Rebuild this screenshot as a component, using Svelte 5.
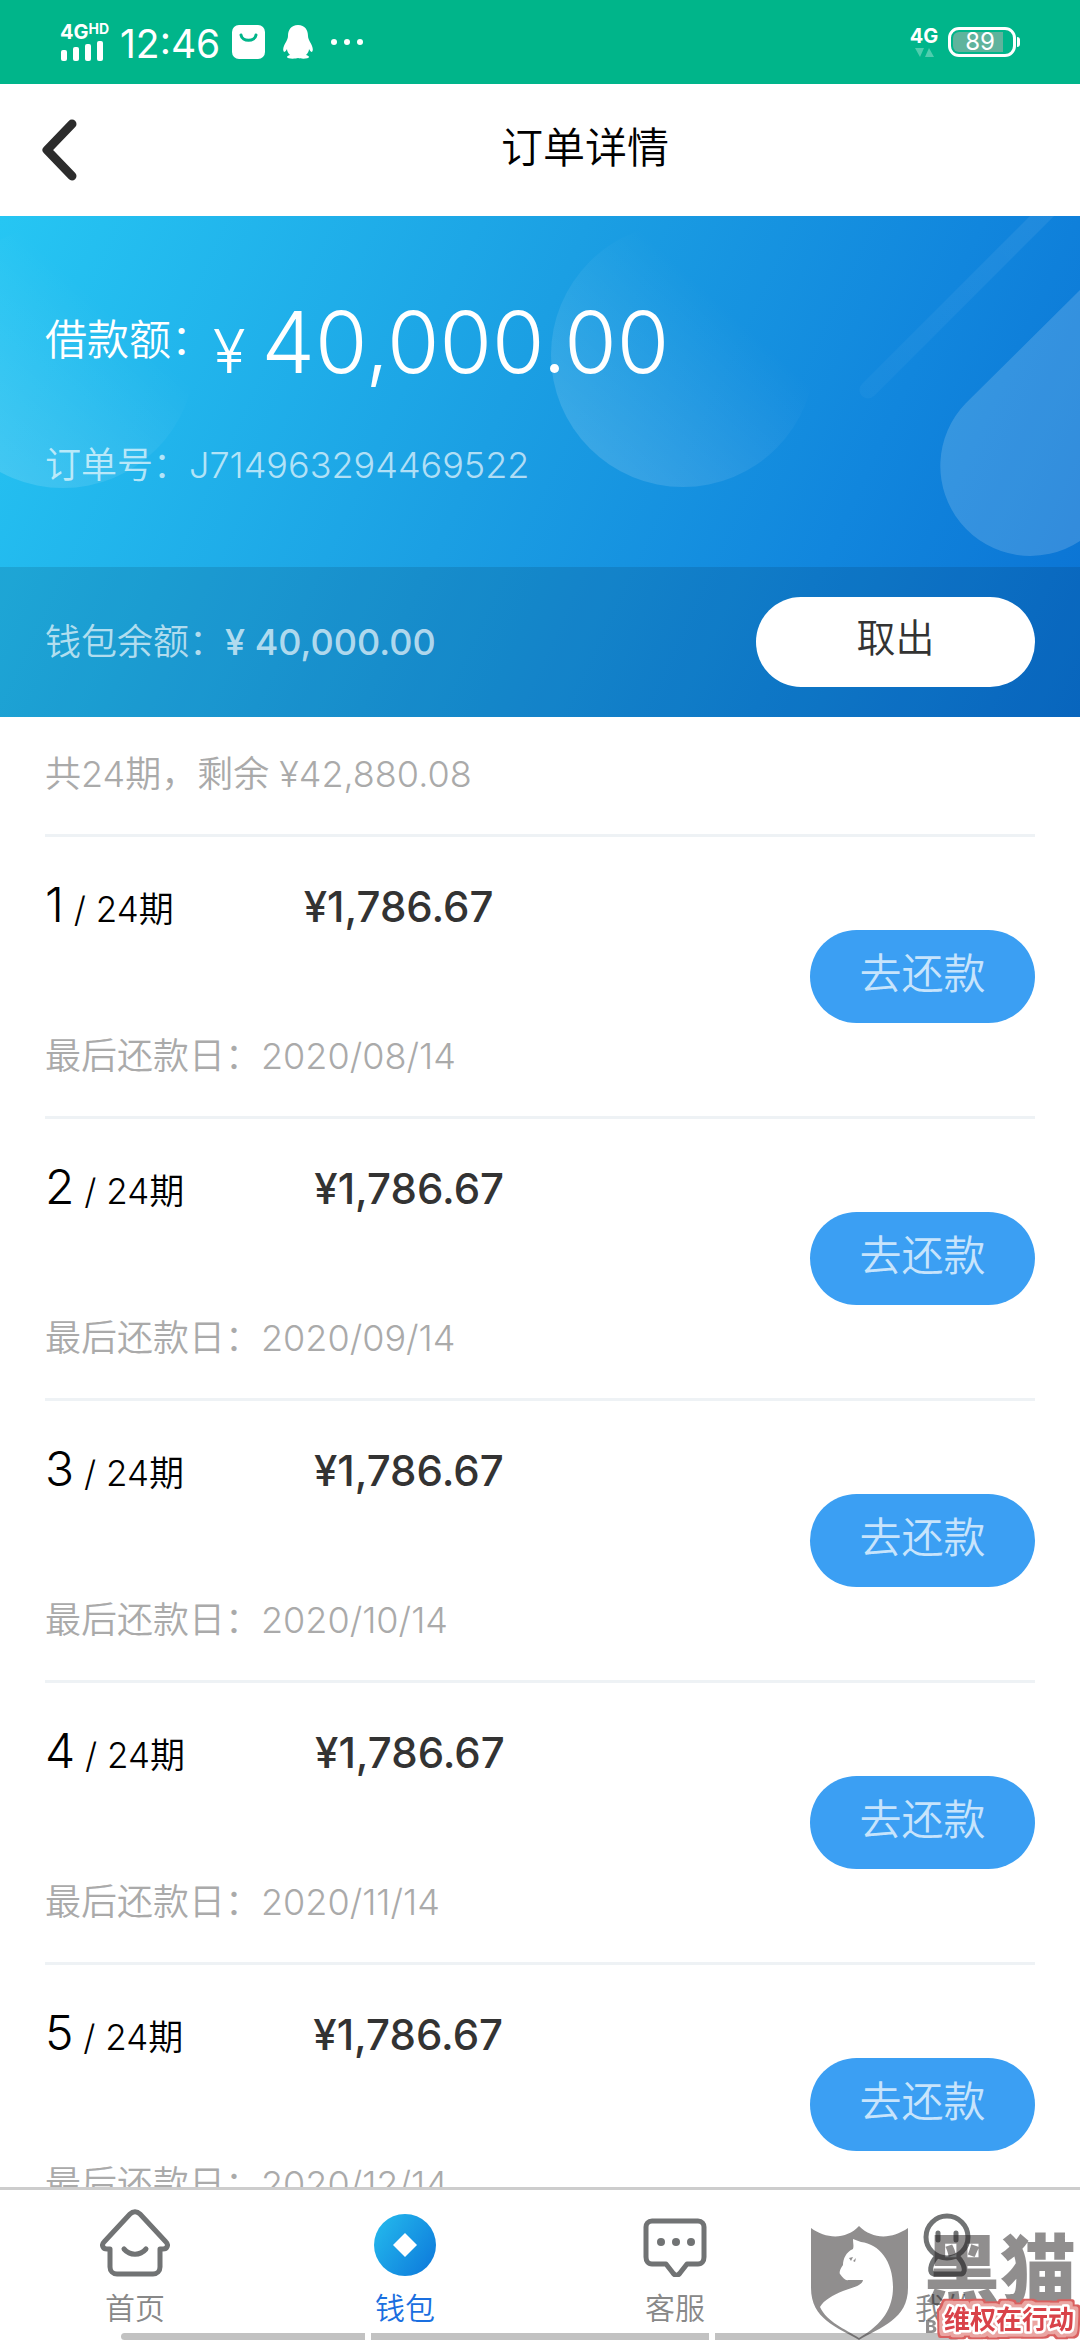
<script>
  const total = 24;
  const installments = [
    { no: 1, amount: '¥1,786.67', due: '2020/08/14' },
    { no: 2, amount: '¥1,786.67', due: '2020/09/14' },
    { no: 3, amount: '¥1,786.67', due: '2020/10/14' },
    { no: 4, amount: '¥1,786.67', due: '2020/11/14' },
    { no: 5, amount: '¥1,786.67', due: '2020/12/14' }
  ];
</script>

<div class="app">
  <div class="status">
    <div class="status-side">
      <div class="signal">
        <span class="net">4G<small>HD</small></span>
        <svg width="44" height="20" viewBox="0 0 44 20" fill="#fff" aria-hidden="true">
          <rect x="1" y="9" width="6" height="11" rx="2" />
          <rect x="13" y="6" width="6" height="14" rx="2" />
          <rect x="25" y="3" width="6" height="17" rx="2" />
          <rect x="37" y="0" width="6" height="20" rx="2" />
        </svg>
      </div>
      <span class="clock">12:46</span>
      <svg class="bag" width="33" height="34" viewBox="0 0 33 34" aria-hidden="true">
        <rect width="33" height="34" rx="7" fill="#fff" />
        <path d="M9 10c1 7 14 7 15 0" fill="none" stroke="#00b58a" stroke-width="3" stroke-linecap="round" />
      </svg>
      <svg class="penguin" width="30" height="34" viewBox="0 0 30 34" fill="#fff" aria-hidden="true">
        <path d="M15 0C8 0 5 5 5 11c0 2-1 4-2 6-2 3-4 8-2 10 1 0 2-1 3-3 0 2 1 4 3 6-1 0-3 1-3 2 0 2 8 2 11 1 3 1 11 1 11-1 0-1-2-2-3-2 2-2 3-4 3-6 1 2 2 3 3 3 2-2 0-7-2-10-1-2-2-4-2-6C25 5 22 0 15 0z" />
      </svg>
      <svg class="dots" width="34" height="8" viewBox="0 0 34 8" fill="#fff" aria-hidden="true">
        <circle cx="4" cy="4" r="3" /><circle cx="17" cy="4" r="3" /><circle cx="30" cy="4" r="3" />
      </svg>
    </div>
    <div class="status-side">
      <div class="signal data">
        <span class="net">4G</span>
        <svg width="20" height="10" viewBox="0 0 20 10" fill="#4fcdae" aria-hidden="true">
          <path d="M1 0h9l-4 9zM11 9h9l-5-9z" />
        </svg>
      </div>
      <div class="battery"><span>89</span></div>
    </div>
  </div>

  <header class="header">
    <button class="back" aria-label="返回">
      <svg width="36" height="62" viewBox="0 0 36 62" aria-hidden="true">
        <path d="M30 5 5 31l25 26" fill="none" stroke="#2c2c2c" stroke-width="9" stroke-linecap="round" stroke-linejoin="round" />
      </svg>
    </button>
    <h1>订单详情</h1>
  </header>

  <section class="hero">
    <svg class="shapes" width="1080" height="501" viewBox="0 0 1080 501" aria-hidden="true">
      <defs>
        <linearGradient id="bubble" x1="0.2" y1="0.9" x2="0.7" y2="0.35">
          <stop offset="0" stop-color="#fff" stop-opacity=".14" />
          <stop offset="1" stop-color="#fff" stop-opacity="0" />
        </linearGradient>
        <linearGradient id="beam" gradientUnits="userSpaceOnUse" x1="860" y1="186" x2="1050" y2="0">
          <stop offset="0" stop-color="#fff" stop-opacity=".03" />
          <stop offset="1" stop-color="#fff" stop-opacity=".07" />
        </linearGradient>
      </defs>
      <circle cx="63" cy="140" r="132" fill="url(#bubble)" />
      <circle cx="683" cy="139" r="132" fill="url(#bubble)" />
      <path d="M868 174 1062-20" fill="none" stroke="url(#beam)" stroke-width="17" stroke-linecap="round" />
      <path d="M1080 74 966 187a90 90 0 0 0 114 138z" fill="#fff" fill-opacity=".16" />
    </svg>
    <div class="loan">
      <p class="amount-line">
        <span class="label">借款额：</span>
        <span class="yen">¥</span>
        <span class="amount">40,000.00</span>
      </p>
      <p class="order">订单号：J714963294469522</p>
    </div>
    <div class="wallet">
      <p>钱包余额：<b>¥ 40,000.00</b></p>
      <button class="withdraw">取出</button>
    </div>
  </section>

  <main class="content">
    <p class="summary">共24期，剩余 ¥42,880.08</p>
    <ul class="list">
      {#each installments as item}
        <li class="row">
          <div class="info">
            <p class="term">
              <span class="period"><em>{item.no}</em> / {total}期</span>
              <strong>{item.amount}</strong>
            </p>
            <p class="due">最后还款日：{item.due}</p>
          </div>
          <button class="repay">去还款</button>
        </li>
      {/each}
    </ul>
  </main>

  <nav class="tabs">
    <a class="tab" href="#home">
      <svg width="70" height="68" viewBox="0 0 70 68" fill="none" stroke="#717374" stroke-width="5" stroke-linecap="round" stroke-linejoin="round" aria-hidden="true">
        <path d="M10 40H7c-4 0-6-4-3-7L30 5c3-3 7-3 10 0l26 28c3 3 1 7-3 7h-3v18c0 4-3 7-7 7H17c-4 0-7-3-7-7z" />
        <path d="M24 40c6 7 16 7 22 0" />
      </svg>
      <span>首页</span>
    </a>
    <a class="tab active" href="#wallet">
      <svg width="70" height="68" viewBox="0 0 70 68" aria-hidden="true">
        <defs>
          <linearGradient id="coin" x1="0" y1="0.2" x2="1" y2="0.9">
            <stop offset="0" stop-color="#23b7ec" />
            <stop offset="1" stop-color="#0d79db" />
          </linearGradient>
        </defs>
        <circle cx="35" cy="36" r="31" fill="url(#coin)" />
        <path d="M35 24 47 36 35 48 23 36z" fill="#fff" />
      </svg>
      <span>钱包</span>
    </a>
    <a class="tab" href="#service">
      <svg width="70" height="68" viewBox="0 0 70 68" aria-hidden="true">
        <path d="M12 12h46c4 0 6 3 6 6v30c0 4-2 7-6 7H47l-7 9c-2 3-5 3-7 0l-7-9H12c-4 0-6-3-6-7V18c0-3 2-6 6-6z" fill="none" stroke="#717374" stroke-width="5" stroke-linejoin="round" />
        <g fill="#717374"><circle cx="21" cy="33" r="4" /><circle cx="36" cy="33" r="4" /><circle cx="51" cy="33" r="4" /></g>
      </svg>
      <span>客服</span>
    </a>
    <a class="tab" href="#me">
      <svg width="70" height="68" viewBox="0 0 70 68" fill="none" stroke="#717374" stroke-width="5" stroke-linecap="round" aria-hidden="true">
        <circle cx="37" cy="28" r="21" />
        <path d="M28 24v7M46 24v7M27 47c-7 8-9 18-2 18h25c7 0 5-10-3-18" />
      </svg>
      <span>我的</span>
    </a>
    <div class="handles" aria-hidden="true"><i></i><i></i><i></i></div>
    <svg class="badge" width="276" height="120" viewBox="0 0 276 120" role="img" aria-label="黑猫 维权在行动">
      <defs>
        <filter id="halo" x="-10%" y="-40%" width="120%" height="180%">
          <feMorphology in="SourceAlpha" operator="dilate" radius="5" result="wide" />
          <feFlood flood-color="#d9605f" />
          <feComposite in2="wide" operator="in" result="outer" />
          <feMorphology in="SourceAlpha" operator="dilate" radius="3" result="mid" />
          <feFlood flood-color="#eaa5a2" />
          <feComposite in2="mid" operator="in" result="inner" />
          <feMerge>
            <feMergeNode in="outer" />
            <feMergeNode in="inner" />
            <feMergeNode in="SourceGraphic" />
          </feMerge>
        </filter>
      </defs>
      <g opacity=".5" fill="#231f20">
        <path fill-rule="evenodd" d="M7 8c15 11 35 12 48-2 14 14 33 13 49 2v60c0 31-27 39-49 52C33 107 7 99 7 68zM49 19c0 4 1 7 0 10-7 3-10 10-10 16-3 4-4 8-3 9 3 4 6 7 8 6h15c-1 6-12 8-20 11-10 4-19 9-23 16 7 15 25 22 39 31 24-14 34-30 34-51 0-26-14-43-32-45z" />
        <path d="m45 38 4-1-2 4zM49 41l3-3-1 4z" />
        <text class="brand" x="120" y="78">黑猫</text>
        <text class="latin" x="121" y="113">BLACK CAT</text>
      </g>
      <text class="slogan" x="140" y="109" filter="url(#halo)">维权在行动</text>
    </svg>
  </nav>
</div>

<style>
  :global(body) { background: #fff; }
  .app {
    display: flex;
    flex-direction: column;
    height: 100vh;
    overflow: hidden;
    font-family: Inter, "Noto Sans CJK SC", sans-serif;
    font-weight: 350;
    font-size: 36px;
    line-height: 48px;
    color: #000;
    background: #fff;
  }
  p, h1, ul { margin: 0; padding: 0; }
  button { border: 0; padding: 0; font: inherit; cursor: pointer; }

  .status {
    flex: none;
    display: flex;
    justify-content: space-between;
    height: 84px;
    padding: 0 64px 0 60px;
    color: #fff;
    background: #00b58a;
  }
  .status-side { display: flex; align-items: center; }
  .signal { display: flex; flex-direction: column; width: 48px; }
  .net { display: flex; align-items: flex-start; font-size: 20px; line-height: 18px; font-weight: 700; }
  .net small { font-size: 14px; line-height: 12px; }
  .clock { margin-left: 12px; font-size: 39px; font-weight: 400; padding-top: 4px; }
  .bag { margin-left: 12px; }
  .penguin { margin-left: 18px; }
  .dots { margin-left: 17px; }
  .data { width: 24px; align-items: center; margin-right: 12px; gap: 3px; }
  .battery {
    position: relative;
    box-sizing: border-box;
    width: 68px;
    height: 30px;
    padding: 2px;
    border: 3px solid #fff;
    border-radius: 11px;
  }
  .battery span {
    display: block;
    width: 50px;
    padding-left: 4px;
    box-sizing: border-box;
    border-radius: 6px 0 0 6px;
    text-align: center;
    font-size: 24px;
    line-height: 20px;
    font-weight: 400;
    background: #5fb39c;
  }
  .battery::after {
    content: "";
    position: absolute;
    right: -7px;
    top: 7px;
    width: 3px;
    height: 10px;
    border-radius: 0 3px 3px 0;
    background: #fff;
  }

  .header {
    flex: none;
    display: grid;
    grid-template-columns: 135px 1fr 45px;
    align-items: center;
    height: 132px;
  }
  .back { display: flex; padding-left: 42px; background: none; }
  h1 { padding-bottom: 4px; text-align: center; font-size: 42px; font-weight: 350; }

  .hero {
    flex: none;
    position: relative;
    color: #fff;
    background: linear-gradient(115deg, #26c6f3 0%, #1b9fe3 45%, #1186dd 75%, #0a71d3 100%);
  }
  .shapes { position: absolute; right: 0; top: 0; }
  .loan { position: relative; height: 351px; padding: 82px 45px 0; box-sizing: border-box; }
  .amount-line { display: flex; align-items: baseline; height: 90px; line-height: 90px; }
  .label { align-self: flex-start; font-size: 42px; line-height: 84px; }
  .yen { font-size: 60px; }
  .amount { margin-left: 16px; font-size: 85px; }
  .order { margin-top: 53px; color: rgba(255, 255, 255, .68); }
  .wallet {
    position: relative;
    display: flex;
    align-items: center;
    justify-content: space-between;
    height: 150px;
    padding: 0 45px;
    color: rgba(255, 255, 255, .68);
    background: rgba(0, 20, 50, .13);
  }
  .wallet b { font-weight: 500; }
  .withdraw {
    width: 279px;
    height: 90px;
    padding-bottom: 8px;
    border-radius: 45px;
    font-size: 39px;
    color: #333;
    background: #fff;
  }

  .content { flex: 1; min-height: 0; overflow: hidden; padding: 0 45px; }
  .summary { padding: 33px 0 36px; color: #aaa; border-bottom: 3px solid #eef2f5; }
  .list { list-style: none; }
  .row {
    display: flex;
    align-items: center;
    justify-content: space-between;
    height: 279px;
    border-bottom: 3px solid #eef2f5;
  }
  .info { padding-top: 8px; }
  .term { display: flex; align-items: baseline; gap: 130px; font-size: 35px; }
  em { font-style: normal; font-size: 48px; }
  strong { font-size: 42px; font-weight: 500; color: #333; }
  .due { margin-top: 99px; color: #aaa; }
  .repay {
    width: 225px;
    height: 93px;
    padding-bottom: 6px;
    border-radius: 47px;
    font-size: 42px;
    color: #c7e4fc;
    background: #3b9ff3;
  }

  .tabs {
    flex: none;
    position: relative;
    display: grid;
    grid-template-columns: repeat(4, 1fr);
    height: 150px;
    border-top: 3px solid #cdcdcd;
    background: #fff;
  }
  .tab {
    display: flex;
    flex-direction: column;
    align-items: center;
    gap: 11px;
    padding-top: 19px;
    font-size: 30px;
    line-height: 40px;
    color: #888;
    text-decoration: none;
  }
  .active { color: #1a6fe0; }
  .handles {
    position: absolute;
    left: 50%;
    bottom: 0;
    display: flex;
    gap: 6px;
    width: 838px;
    margin-left: -419px;
  }
  .handles i { flex: 244; height: 7px; background: #c2c2c2; }
  .handles i:nth-child(2) { flex: 338; }
  .handles i:first-child { border-radius: 5px 0 0 5px; }
  .handles i:last-child { border-radius: 0 5px 5px 0; }
  .badge { position: absolute; right: 0; bottom: 0; }
  .brand { font-size: 76px; font-weight: 900; }
  .latin { font-size: 18px; font-weight: 800; }
  .slogan {
    font-size: 26px;
    font-weight: 600;
    fill: #d9434a;
    stroke: #fff;
    stroke-width: 5px;
    stroke-linejoin: round;
    paint-order: stroke;
  }
</style>
